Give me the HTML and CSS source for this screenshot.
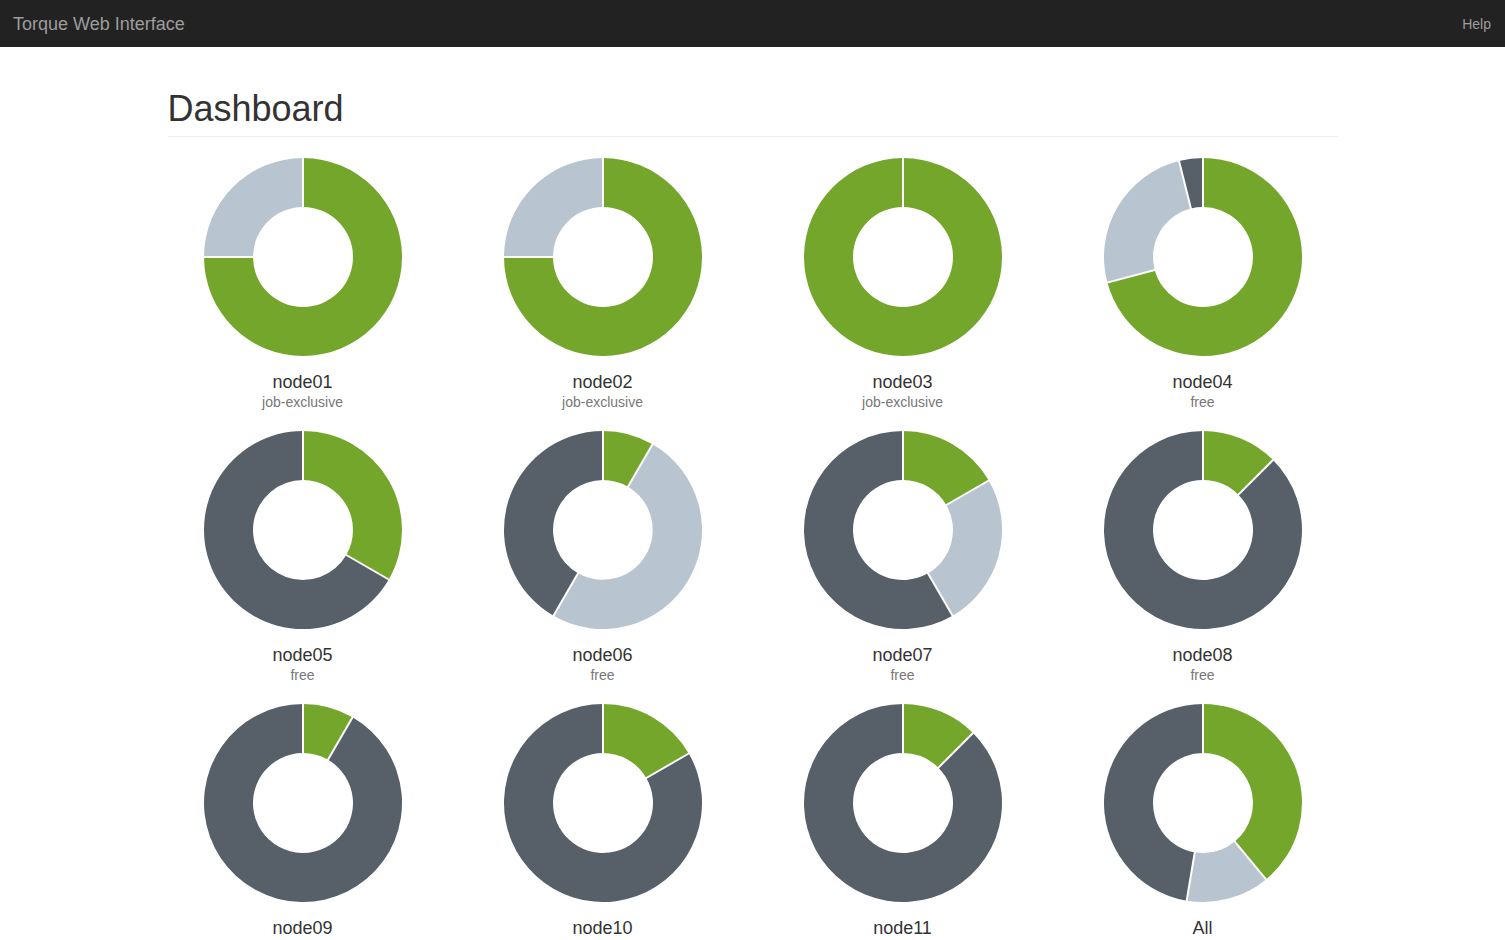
FILE: index.html
```html
<!DOCTYPE html>
<html>
<head>
<meta charset="utf-8">
<title>Torque Web Interface</title>
<link rel="stylesheet" href="styles.css">
</head>
<body>
<nav class="navbar">
  <a class="brand" href="#">Torque Web Interface</a>
  <a class="nav-link" href="#">Help</a>
</nav>
<main class="container">
  <div class="page-header"><h1>Dashboard</h1></div>
  <div class="grid">
    <div class="node">
      <svg class="donut" viewBox="0 0 200 200" width="200" height="200">
        <path class="g" d="M100,1 A99,99 0 1 1 1,100 L50,100 A50,50 0 1 0 100,50 Z"/>
        <path class="l" d="M1,100 A99,99 0 0 1 100,1 L100,50 A50,50 0 0 0 50,100 Z"/>
        <line x1="100" y1="0" x2="100" y2="51"/>
        <line x1="0" y1="100" x2="51" y2="100"/>
      </svg>
      <div class="name">node01</div><div class="state">job-exclusive</div>
    </div>
    <div class="node">
      <svg class="donut" viewBox="0 0 200 200" width="200" height="200">
        <path class="g" d="M100,1 A99,99 0 1 1 1,100 L50,100 A50,50 0 1 0 100,50 Z"/>
        <path class="l" d="M1,100 A99,99 0 0 1 100,1 L100,50 A50,50 0 0 0 50,100 Z"/>
        <line x1="100" y1="0" x2="100" y2="51"/>
        <line x1="0" y1="100" x2="51" y2="100"/>
      </svg>
      <div class="name">node02</div><div class="state">job-exclusive</div>
    </div>
    <div class="node">
      <svg class="donut" viewBox="0 0 200 200" width="200" height="200">
        <path class="g ring" d="M100,1 A99,99 0 1 1 100,199 A99,99 0 1 1 100,1 Z M100,50 A50,50 0 1 0 100,150 A50,50 0 1 0 100,50 Z"/>
        <line x1="100" y1="0" x2="100" y2="51"/>
      </svg>
      <div class="name">node03</div><div class="state">job-exclusive</div>
    </div>
    <div class="node">
      <svg class="donut" viewBox="0 0 200 200" width="200" height="200">
        <path class="g" d="M100,1 A99,99 0 1 1 4.37,125.62 L51.70,112.94 A50,50 0 1 0 100,50 Z"/>
        <path class="l" d="M4.37,125.62 A99,99 0 0 1 76.05,3.94 L87.90,51.49 A50,50 0 0 0 51.70,112.94 Z"/>
        <path class="d" d="M76.05,3.94 A99,99 0 0 1 100,1 L100,50 A50,50 0 0 0 87.90,51.49 Z"/>
        <line x1="100" y1="0" x2="100" y2="51"/>
        <line x1="3.40" y1="125.88" x2="52.66" y2="112.68"/>
        <line x1="75.81" y1="2.97" x2="88.14" y2="52.46"/>
      </svg>
      <div class="name">node04</div><div class="state">free</div>
    </div>

    <div class="node">
      <svg class="donut" viewBox="0 0 200 200" width="200" height="200">
        <path class="g" d="M100,1 A99,99 0 0 1 185.74,149.5 L143.30,125 A50,50 0 0 0 100,50 Z"/>
        <path class="d" d="M185.74,149.5 A99,99 0 1 1 100,1 L100,50 A50,50 0 1 0 143.30,125 Z"/>
        <line x1="100" y1="0" x2="100" y2="51"/>
        <line x1="186.6" y1="150" x2="142.44" y2="124.5"/>
      </svg>
      <div class="name">node05</div><div class="state">free</div>
    </div>
    <div class="node">
      <svg class="donut" viewBox="0 0 200 200" width="200" height="200">
        <path class="g" d="M100,1 A99,99 0 0 1 149.5,14.26 L125,56.70 A50,50 0 0 0 100,50 Z"/>
        <path class="l" d="M149.5,14.26 A99,99 0 0 1 50.5,185.74 L75,143.30 A50,50 0 0 0 125,56.70 Z"/>
        <path class="d" d="M50.5,185.74 A99,99 0 0 1 100,1 L100,50 A50,50 0 0 0 75,143.30 Z"/>
        <line x1="100" y1="0" x2="100" y2="51"/>
        <line x1="150" y1="13.4" x2="124.5" y2="57.56"/>
        <line x1="50" y1="186.6" x2="75.5" y2="142.44"/>
      </svg>
      <div class="name">node06</div><div class="state">free</div>
    </div>
    <div class="node">
      <svg class="donut" viewBox="0 0 200 200" width="200" height="200">
        <path class="g" d="M100,1 A99,99 0 0 1 185.74,50.5 L143.30,75 A50,50 0 0 0 100,50 Z"/>
        <path class="l" d="M185.74,50.5 A99,99 0 0 1 149.5,185.74 L125,143.30 A50,50 0 0 0 143.30,75 Z"/>
        <path class="d" d="M149.5,185.74 A99,99 0 1 1 100,1 L100,50 A50,50 0 1 0 125,143.30 Z"/>
        <line x1="100" y1="0" x2="100" y2="51"/>
        <line x1="186.6" y1="50" x2="142.44" y2="75.5"/>
        <line x1="150" y1="186.6" x2="124.5" y2="142.44"/>
      </svg>
      <div class="name">node07</div><div class="state">free</div>
    </div>
    <div class="node">
      <svg class="donut" viewBox="0 0 200 200" width="200" height="200">
        <path class="g" d="M100,1 A99,99 0 0 1 170,30 L135.36,64.64 A50,50 0 0 0 100,50 Z"/>
        <path class="d" d="M170,30 A99,99 0 1 1 100,1 L100,50 A50,50 0 1 0 135.36,64.64 Z"/>
        <line x1="100" y1="0" x2="100" y2="51"/>
        <line x1="170.71" y1="29.29" x2="134.65" y2="65.35"/>
      </svg>
      <div class="name">node08</div><div class="state">free</div>
    </div>

    <div class="node">
      <svg class="donut" viewBox="0 0 200 200" width="200" height="200">
        <path class="g" d="M100,1 A99,99 0 0 1 149.5,14.26 L125,56.70 A50,50 0 0 0 100,50 Z"/>
        <path class="d" d="M149.5,14.26 A99,99 0 1 1 100,1 L100,50 A50,50 0 1 0 125,56.70 Z"/>
        <line x1="100" y1="0" x2="100" y2="51"/>
        <line x1="150" y1="13.4" x2="124.5" y2="57.56"/>
      </svg>
      <div class="name">node09</div>
    </div>
    <div class="node">
      <svg class="donut" viewBox="0 0 200 200" width="200" height="200">
        <path class="g" d="M100,1 A99,99 0 0 1 185.74,50.5 L143.30,75 A50,50 0 0 0 100,50 Z"/>
        <path class="d" d="M185.74,50.5 A99,99 0 1 1 100,1 L100,50 A50,50 0 1 0 143.30,75 Z"/>
        <line x1="100" y1="0" x2="100" y2="51"/>
        <line x1="186.6" y1="50" x2="142.44" y2="75.5"/>
      </svg>
      <div class="name">node10</div>
    </div>
    <div class="node">
      <svg class="donut" viewBox="0 0 200 200" width="200" height="200">
        <path class="g" d="M100,1 A99,99 0 0 1 170,30 L135.36,64.64 A50,50 0 0 0 100,50 Z"/>
        <path class="d" d="M170,30 A99,99 0 1 1 100,1 L100,50 A50,50 0 1 0 135.36,64.64 Z"/>
        <line x1="100" y1="0" x2="100" y2="51"/>
        <line x1="170.71" y1="29.29" x2="134.65" y2="65.35"/>
      </svg>
      <div class="name">node11</div>
    </div>
    <div class="node">
      <svg class="donut" viewBox="0 0 200 200" width="200" height="200">
        <path class="g" d="M100,1 A99,99 0 0 1 162.97,176.39 L131.80,138.58 A50,50 0 0 0 100,50 Z"/>
        <path class="l" d="M162.97,176.39 A99,99 0 0 1 83.66,197.64 L91.75,149.32 A50,50 0 0 0 131.80,138.58 Z"/>
        <path class="d" d="M83.66,197.64 A99,99 0 0 1 100,1 L100,50 A50,50 0 0 0 91.75,149.32 Z"/>
        <line x1="100" y1="0" x2="100" y2="51"/>
        <line x1="163.6" y1="177.2" x2="131.17" y2="137.81"/>
        <line x1="83.5" y1="198.6" x2="91.92" y2="148.34"/>
      </svg>
      <div class="name">All</div>
    </div>
  </div>
</main>
</body>
</html>
```

FILE: styles.css
```css
html, body {
  margin: 0;
  padding: 0;
}
body {
  font-family: "Liberation Sans", Arial, Helvetica, sans-serif;
  font-size: 14px;
  color: #333;
  background: #fff;
}
.navbar {
  height: 47px;
  background: #222;
  display: flex;
  align-items: center;
  justify-content: space-between;
  padding: 0 14px 0 13px;
}
.brand {
  color: #9d9d9d;
  font-size: 18px;
  text-decoration: none;
  line-height: 20px;
}
.nav-link {
  color: #9d9d9d;
  font-size: 14px;
  text-decoration: none;
  line-height: 20px;
}
.container {
  width: 1170px;
  margin: 0 auto;
}
.page-header {
  margin: 42px 0 20px;
  padding-bottom: 7px;
  border-bottom: 1px solid #eee;
}
.page-header h1 {
  margin: 0;
  font-size: 36px;
  font-weight: 500;
  line-height: 1.1;
  color: #333;
}
.grid {
  margin: 0 -15px;
  display: grid;
  grid-template-columns: repeat(4, 300px);
  row-gap: 18px;
}
.node {
  display: flex;
  flex-direction: column;
  align-items: center;
}
.donut {
  display: block;
}
.donut line {
  stroke: #fff;
  stroke-width: 2;
}
.donut .ring {
  fill-rule: evenodd;
}
.g { fill: #73a62a; }
.l { fill: #b8c4cf; }
.d { fill: #575f69; }
.name {
  margin-top: 15px;
  font-size: 18px;
  line-height: 20px;
  color: #333;
}
.state {
  font-size: 14px;
  line-height: 20px;
  color: #777;
}
```
